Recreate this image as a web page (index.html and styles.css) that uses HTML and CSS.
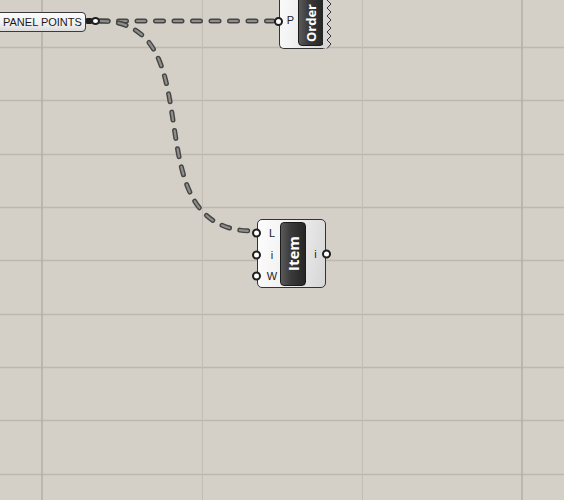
FILE: index.html
```html
<!DOCTYPE html>
<html>
<head>
<meta charset="utf-8">
<link rel="stylesheet" href="styles.css">
</head>
<body>
<div class="canvas">
  <svg class="layer" width="564" height="500" viewBox="0 0 564 500">
    <g class="grid-h">
      <line x1="0" y1="47.5" x2="564" y2="47.5"/>
      <line x1="0" y1="100.5" x2="564" y2="100.5"/>
      <line x1="0" y1="154.5" x2="564" y2="154.5"/>
      <line x1="0" y1="207.5" x2="564" y2="207.5"/>
      <line x1="0" y1="260.5" x2="564" y2="260.5"/>
      <line x1="0" y1="314.5" x2="564" y2="314.5"/>
      <line x1="0" y1="367.5" x2="564" y2="367.5"/>
      <line x1="0" y1="420.5" x2="564" y2="420.5"/>
      <line x1="0" y1="474.5" x2="564" y2="474.5"/>
    </g>
    <g class="grid-v-major">
      <line x1="42" y1="0" x2="42" y2="500"/>
      <line x1="522" y1="0" x2="522" y2="500"/>
    </g>
    <g class="grid-v-minor">
      <line x1="202.5" y1="0" x2="202.5" y2="500"/>
      <line x1="362.5" y1="0" x2="362.5" y2="500"/>
    </g>
    <g class="wire">
      <path class="wire-out" d="M100,21 L273,21"/>
      <path class="wire-in" d="M100,21 L273,21"/>
      <path class="wire-out" d="M100,21 C218,21 128,231 253,231"/>
      <path class="wire-in" d="M100,21 C218,21 128,231 253,231"/>
    </g>
    <g class="panel-grip">
      <rect x="86" y="18" width="6" height="6" rx="1"/>
      <ellipse class="ring" cx="95.5" cy="21" rx="3.5" ry="3"/>
    </g>
  </svg>

  <div class="panel">PANEL POINTS</div>

  <div class="node order">
    <div class="ports ports-in">
      <div class="port">P<span class="grip grip-in"></span></div>
    </div>
    <div class="capsule"><span class="cap-text">Order</span></div>
    <svg class="zigzag" width="9" height="89" viewBox="0 0 9 89">
      <polygon class="zz-fill" points="0,0 4,0 8,4 4,8 8,12 4,16 8,20 4,24 8,28 4,32 8,36 4,40 8,44 4,48 8,52 4,56 8,60 4,64 8,68 4,72 8,76 4,80 8,84 4,88.5 0,88.5"/>
      <polyline class="zz-line" points="4,0 8,4 4,8 8,12 4,16 8,20 4,24 8,28 4,32 8,36 4,40 8,44 4,48 8,52 4,56 8,60 4,64 8,68 4,72 8,76 4,80 8,84 4,88.5"/>
    </svg>
  </div>

  <div class="node item">
    <div class="ports ports-in">
      <div class="port">L<span class="grip grip-in"></span></div>
      <div class="port">i<span class="grip grip-in"></span></div>
      <div class="port">W<span class="grip grip-in"></span></div>
    </div>
    <div class="capsule"><span class="cap-text">Item</span></div>
    <div class="ports ports-out">
      <div class="port">i<span class="grip grip-out"></span></div>
    </div>
  </div>
</div>
</body>
</html>
```

FILE: styles.css
```css
html, body {
  margin: 0;
  padding: 0;
}
body {
  width: 564px;
  height: 500px;
  overflow: hidden;
  background: #d4d0c8;
  font-family: "Open Sans", "Liberation Sans", sans-serif;
}
.canvas {
  position: relative;
  width: 564px;
  height: 500px;
  background: #d4d0c8;
  overflow: hidden;
}
.layer {
  position: absolute;
  left: 0;
  top: 0;
  z-index: 0;
  pointer-events: none;
}
.grid-h line {
  stroke: #bcb8b0;
  stroke-width: 1.5;
}
.grid-v-major line {
  stroke: #b3afa7;
  stroke-width: 1.5;
}
.grid-v-minor line {
  stroke: #c2beb6;
  stroke-width: 1;
}
.wire path {
  fill: none;
  stroke-linecap: round;
  stroke-dasharray: 8 10.5;
}
.wire-out {
  stroke: #454545;
  stroke-width: 5;
}
.wire-in {
  stroke: #8e8e8b;
  stroke-width: 2.2;
}
.panel-grip rect {
  fill: #1e1e1e;
}
.panel-grip .ring {
  fill: #ffffff;
  stroke: #1e1e1e;
  stroke-width: 2;
}

.grip {
  position: absolute;
  width: 5px;
  height: 5px;
  border: 2px solid #1e1e1e;
  border-radius: 50%;
  background: #ffffff;
  top: 50%;
  transform: translateY(-50%);
  z-index: 3;
}

.panel {
  position: absolute;
  z-index: 1;
  left: -8px;
  top: 12px;
  width: 94px;
  height: 20px;
  box-sizing: border-box;
  border: 1px solid #3a3a3a;
  border-radius: 4px;
  background: linear-gradient(#fbfbfb, #f0f0f0 60%, #dcdcdc);
  font-family: "Liberation Sans", sans-serif;
  font-size: 11px;
  line-height: 18px;
  padding-left: 10px;
  color: #1a1a1a;
  white-space: nowrap;
}

.node {
  position: absolute;
  z-index: 1;
  display: flex;
  box-sizing: border-box;
  border: 1px solid #333333;
  border-radius: 5px;
  background: linear-gradient(100deg, #fdfdfd 0%, #f1f1f1 45%, #d6d6d6 100%);
  color: #222222;
  font-family: "Liberation Sans", sans-serif;
  font-size: 11px;
}
.ports {
  display: flex;
  flex-direction: column;
}
.port {
  position: relative;
  flex: 1;
  display: flex;
  align-items: center;
}
.capsule {
  border-radius: 4px;
  background: linear-gradient(90deg, #5a5a5a 0%, #3a3a3a 40%, #262626 100%);
  border: 1px solid #1b1b1b;
  box-sizing: border-box;
  display: flex;
  align-items: center;
  justify-content: center;
}
.cap-text {
  writing-mode: vertical-rl;
  transform: rotate(180deg);
  color: #ffffff;
  font-family: "Open Sans", sans-serif;
  font-weight: 700;
  white-space: nowrap;
}

/* Order node */
.order {
  left: 279px;
  top: -40px;
  width: 46px;
  height: 89px;
  border-right: none;
  border-top-right-radius: 0;
  border-bottom-right-radius: 0;
}
.order .ports-in {
  width: 18px;
}
.order .port {
  justify-content: center;
  align-items: flex-start;
  padding-left: 3px;
  padding-top: 53px;
}
.order .grip-in {
  left: -6px;
  top: 56px;
  transform: none;
}
.order .capsule {
  width: 26px;
  height: 86px;
  margin-bottom: 2px;
  align-self: flex-end;
}
.order .cap-text {
  font-size: 13px;
  margin-top: 40px;
}
.zigzag {
  position: absolute;
  right: -7px;
  top: -1px;
}
.zz-fill {
  fill: #d8d8d8;
}
.zz-line {
  fill: none;
  stroke: #333333;
  stroke-width: 1;
}

/* Item node */
.item {
  left: 257px;
  top: 219px;
  width: 69px;
  height: 69px;
}
.item .ports-in {
  width: 22px;
  padding: 2px 0 0;
}
.item .ports-in .port {
  justify-content: center;
  padding-left: 6px;
}
.item .grip-in {
  left: -6px;
}
.item .capsule {
  width: 26px;
  margin: 2px 0 1px;
}
.item .cap-text {
  font-size: 15px;
}
.item .ports-out {
  flex: 1;
}
.item .ports-out .port {
  justify-content: center;
}
.item .grip-out {
  right: -6px;
}
```
